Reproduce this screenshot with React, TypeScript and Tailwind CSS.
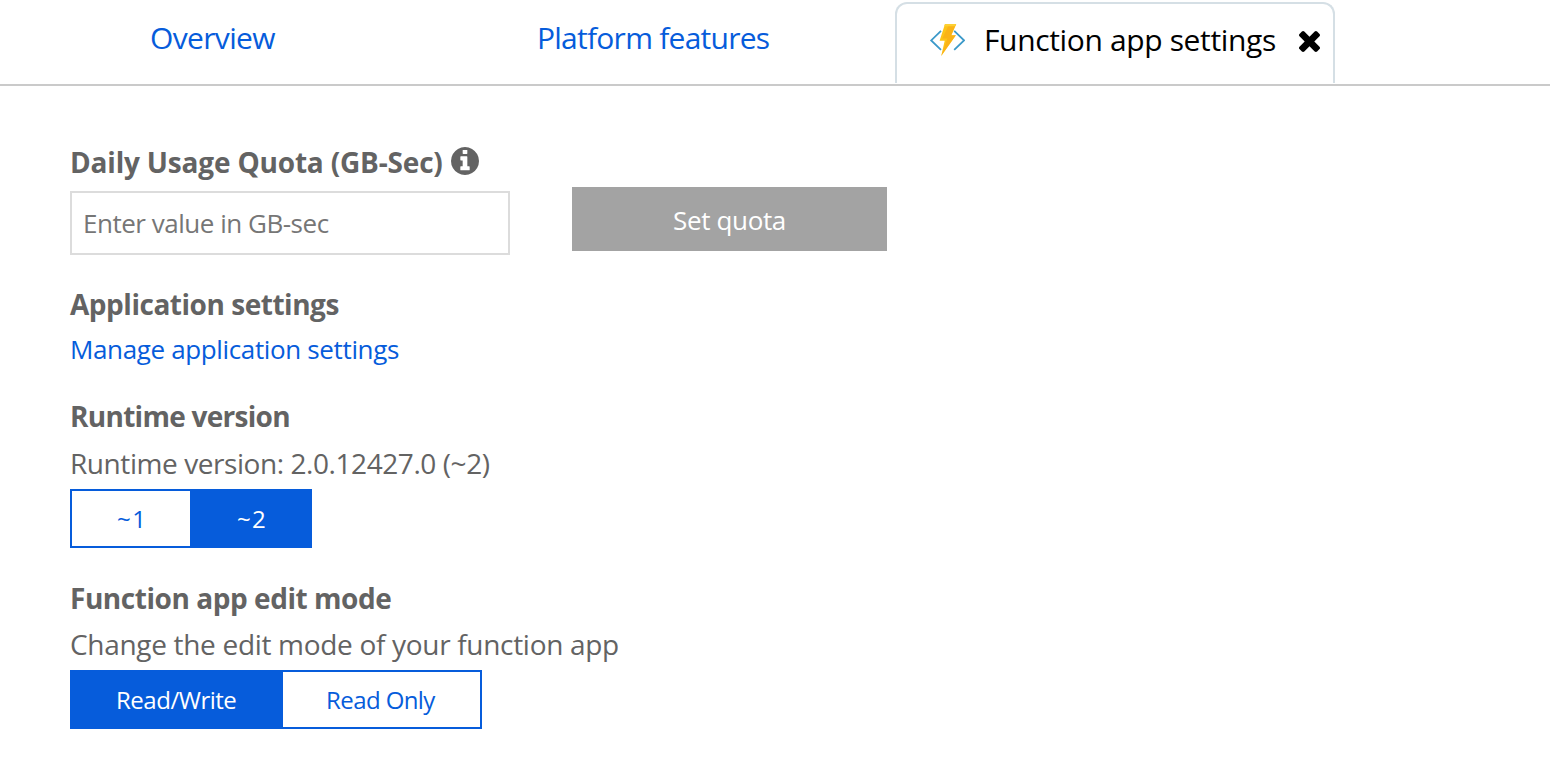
import type { ReactNode } from "react";

function FunctionIcon() {
  return (
    <svg className="h-8 w-9 shrink-0" viewBox="0 0 36 32" fill="none">
      <path d="M12 6.9 2.2 16.4l9.8 9.4M25.2 6.9l9.8 9.5-9.8 9.4" stroke="#3b99c9" strokeWidth="1.8" />
      <path d="M16 0H27.2L22.3 11.2H26.9L12.2 32l3.5-15.2H10.6z" fill="#fcc41a" />
      <path d="M27.2 0 22.3 11.2H26.9L12.2 32l6.2-17.6h-5.2L20.3 0z" fill="#f9ae17" opacity="0.75" />
      <path d="M16 0H27.2l-1 2.3H15.2z" fill="#fdd032" />
    </svg>
  );
}

function InfoIcon() {
  return (
    <svg className="mb-[3px] h-7 w-7 shrink-0 self-center" viewBox="128 128 1536 1536" fill="#636363">
      <path d="M1152 1376v-160q0-14-9-23t-23-9h-96v-512q0-14-9-23t-23-9h-320q-14 0-23 9t-9 23v160q0 14 9 23t23 9h96v320h-96q-14 0-23 9t-9 23v160q0 14 9 23t23 9h448q14 0 23-9t9-23zm-128-896v-160q0-14-9-23t-23-9h-192q-14 0-23 9t-9 23v160q0 14 9 23t23 9h192q14 0 23-9t9-23zm640 416q0 209-103 385.5t-279.5 279.5-385.5 103-385.5-103-279.5-279.5-103-385.5 103-385.5 279.5-279.5 385.5-103 385.5 103 279.5 279.5 103 385.5z" />
    </svg>
  );
}

function CloseIcon() {
  return (
    <svg className="h-[21px] w-[21px] shrink-0" viewBox="302 366 1188 1188" fill="#000">
      <path d="M1490 1322q0 40-28 68l-136 136q-28 28-68 28t-68-28l-294-294-294 294q-28 28-68 28t-68-28l-136-136q-28-28-28-68t28-68l294-294-294-294q-28-28-28-68t28-68l136-136q28-28 68-28t68 28l294 294 294-294q28-28 68-28t68 28l136 136q28 28 28 68t-28 68l-294 294 294 294q28 28 28 68z" />
    </svg>
  );
}

function Heading({ className, children }: { className: string; children: ReactNode }) {
  return <h2 className={`text-[28px] leading-[30px] font-bold whitespace-nowrap ${className}`}>{children}</h2>;
}

function Option({ selected, className, children }: { selected?: boolean; className: string; children: ReactNode }) {
  return (
    <button
      className={`flex h-full items-center pt-px text-2xl leading-[30px] whitespace-nowrap ${
        selected ? "bg-[#065cdb] text-white" : "bg-white text-[#065cdb]"
      } ${className}`}
    >
      {children}
    </button>
  );
}

export default function App() {
  return (
    <div className="h-[783px] w-[1550px] overflow-hidden bg-white font-['Open_Sans','Noto_Sans',sans-serif] text-[#636363]">
      <nav className="flex h-[86px] items-start border-b-2 border-[#cacaca] text-[30px] leading-[30px] whitespace-nowrap">
        <a className="mt-[23px] ml-[150px] w-[387px] tracking-[-0.65px] text-[#065cdb]">Overview</a>
        <a className="mt-[23px] w-[358px] tracking-[-0.75px] text-[#065cdb]">Platform features</a>
        <div className="mt-[2px] flex h-[81px] w-[440px] items-start rounded-t-xl border-2 border-b-0 border-[#d5dfe5] pl-8 text-black">
          <div className="mt-5 flex">
            <FunctionIcon />
          </div>
          <span className="mt-[21px] ml-[19px] w-[315px] tracking-[-0.36px]">Function app settings</span>
          <button className="mt-[27px]">
            <CloseIcon />
          </button>
        </div>
      </nav>

      <main className="flex flex-col items-start pl-[70px]">
        <section className="flex">
          <div className="w-[440px] pt-[61px]">
            <div className="flex h-[30px] items-center">
              <Heading className="w-[381px] tracking-[-0.18px]">Daily Usage Quota (GB-Sec)</Heading>
              <InfoIcon />
            </div>
            <input
              className="mt-[14px] block h-16 w-full border-2 border-[#dcdcdc] pl-[11px] text-[26px] tracking-[-0.48px] outline-none placeholder:text-[#767676]"
              placeholder="Enter value in GB-sec"
            />
          </div>
          <button className="mt-[101px] ml-[62px] h-16 w-[315px] bg-[#a3a3a3] pt-px text-[26px] leading-[30px] tracking-[-0.35px] text-white">
            Set quota
          </button>
        </section>

        <Heading className="mt-[34px] tracking-[-0.47px]">Application settings</Heading>
        <a className="mt-[15px] text-[26px] leading-[30px] tracking-[-0.36px] whitespace-nowrap text-[#065cdb]">
          Manage application settings
        </a>

        <Heading className="mt-[37px] tracking-[-0.72px]">Runtime version</Heading>
        <p className="mt-[17px] text-[28px] leading-[30px] tracking-[-0.43px] whitespace-nowrap">
          Runtime version: 2.0.12427.0 (~2)
        </p>
        <div className="mt-[11px] flex h-[59px] w-[242px] border-2 border-[#065cdb]">
          <Option className="w-[118px] pl-[45px] tracking-[1.5px]">~1</Option>
          <Option selected className="flex-1 pl-[47px] tracking-[1.2px]">~2</Option>
        </div>

        <Heading className="mt-[35px] tracking-[-0.45px]">Function app edit mode</Heading>
        <p className="mt-[16px] text-[28px] leading-[30px] tracking-[-0.31px] whitespace-nowrap">
          Change the edit mode of your function app
        </p>
        <div className="mt-[11px] flex h-[59px] w-[412px] border-2 border-[#065cdb]">
          <Option selected className="w-[211px] pl-[44px] tracking-[-0.48px]">Read/Write</Option>
          <Option className="flex-1 pl-[43px] tracking-[-0.58px]">Read Only</Option>
        </div>
      </main>
    </div>
  );
}
